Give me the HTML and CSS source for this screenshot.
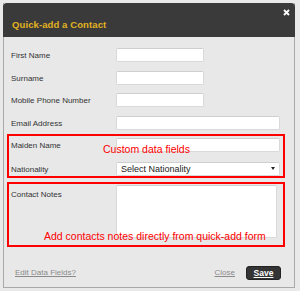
FILE: index.html
```html
<!DOCTYPE html>
<html lang="en">
<head>
  <meta charset="UTF-8" />
  <title>Quick-add a Contact</title>
  <link rel="stylesheet" href="styles.css">
</head>
<body>
  <div class="dialog">
    <header class="dialog-head">
      <h1>Quick-add a Contact</h1>
      <button class="close-x" aria-label="Close">
        <svg width="7" height="7" viewBox="0 0 7 7"><path d="M1 1 L6 6 M6 1 L1 6" stroke="#fff" stroke-width="1.8" /></svg>
      </button>
    </header>

    <form class="form">
      <div class="row">
        <label>First Name</label>
        <input type="text" class="short" />
      </div>
      <div class="row">
        <label>Surname</label>
        <input type="text" class="short" />
      </div>
      <div class="row">
        <label>Mobile Phone Number</label>
        <input type="text" class="short" />
      </div>
      <div class="row">
        <label>Email Address</label>
        <input type="text" class="long" />
      </div>

      <div class="group custom">
        <div class="row">
          <label>Maiden Name</label>
          <input type="text" class="long" />
        </div>
        <div class="row">
          <label>Nationality</label>
          <div class="select">
            <span>Select Nationality</span>
            <span class="arrow"></span>
          </div>
        </div>
        <span class="note note-custom">Custom data fields</span>
      </div>

      <div class="group notes">
        <div class="row row-top">
          <label>Contact Notes</label>
          <textarea></textarea>
        </div>
        <span class="note note-notes">Add contacts notes directly from quick-add form</span>
      </div>
    </form>

    <footer class="dialog-foot">
      <a href="#" class="edit-link">Edit Data Fields?</a>
      <div class="actions">
        <a href="#" class="close-link">Close</a>
        <button class="save-btn">Save</button>
      </div>
    </footer>
  </div>
</body>
</html>
```

FILE: styles.css
```css
body {
  margin: 0;
  background: #e9e9ea;
  font-family: 'Liberation Sans', Arial, sans-serif;
  color: #333;
}

.dialog {
  position: relative;
  margin: 3px 0 0 3px;
  width: 290px;
  height: 284px;
  background: #e8e8e9;
  border: 1px solid #a9a9a9;
  border-top: none;
  display: flex;
  flex-direction: column;
}

.dialog-head {
  margin: 0 -1px;
  height: 34px;
  background: #3b3a3a;
  border-radius: 4px 4px 0 0;
  display: flex;
  justify-content: space-between;
  align-items: flex-start;
  padding: 0 5px 0 9px;
}

.dialog-head h1 {
  margin: 16px 0 0;
  font-size: 9.5px;
  font-weight: bold;
  color: #e2b322;
  letter-spacing: 0.1px;
}

.close-x {
  background: none;
  border: none;
  padding: 0;
  margin-top: 6px;
  width: 7px;
  height: 7px;
  line-height: 0;
}

.form {
  padding: 11px 0 0 3px;
  display: flex;
  flex-direction: column;
  gap: 8.7px;
}

.row {
  display: flex;
  align-items: center;
  height: 14px;
  font-size: 8px;
}

.row label {
  width: 105px;
  padding-left: 4px;
  padding-top: 1px;
}

input[type="text"],
textarea,
.select {
  box-sizing: border-box;
  height: 14px;
  background: #fff;
  border: 1px solid #d9d9d9;
  border-top-color: #cfcfcf;
  border-radius: 2px;
}

.short { width: 88px; }
.long { width: 164px; }

.group {
  position: relative;
  width: 274px;
  border: 2px solid #ff0000;
  display: flex;
  flex-direction: column;
  gap: 9.7px;
}

.group .row label {
  padding-left: 2px;
}

.custom {
  margin-top: -4.8px;
  padding: 2px 0 0;
}

.notes {
  margin-top: -4.7px;
  padding: 1.3px 0 7px;
}

.row-top {
  height: auto;
  align-items: flex-start;
}

.row-top label {
  padding-top: 5px;
}

textarea {
  width: 161px;
  height: 53px;
  resize: none;
}

.select {
  width: 164px;
  display: flex;
  justify-content: space-between;
  align-items: center;
  padding: 0 4px 0 4px;
  font-size: 9px;
  color: #222;
}

.arrow {
  width: 0;
  height: 0;
  border-left: 2.5px solid transparent;
  border-right: 2.5px solid transparent;
  border-top: 3px solid #222;
}

.note {
  position: absolute;
  color: #f00;
  font-size: 10.5px;
  white-space: nowrap;
}

.note-custom {
  left: 94px;
  top: 7px;
}

.note-notes {
  left: 35px;
  top: 46px;
}

.dialog-foot {
  margin-top: auto;
  padding: 0 13px 7.5px 11px;
  display: flex;
  justify-content: space-between;
  align-items: center;
  font-size: 8px;
}

.dialog-foot a {
  color: #8a8a8a;
}

.actions {
  display: flex;
  align-items: center;
  gap: 11px;
}

.save-btn {
  width: 35px;
  height: 14px;
  padding: 0;
  background: #343434;
  border: 1px solid #222;
  border-radius: 3px;
  color: #fff;
  font-family: 'Liberation Sans', Arial, sans-serif;
  font-size: 8.5px;
  font-weight: bold;
  text-decoration: underline;
}
```
